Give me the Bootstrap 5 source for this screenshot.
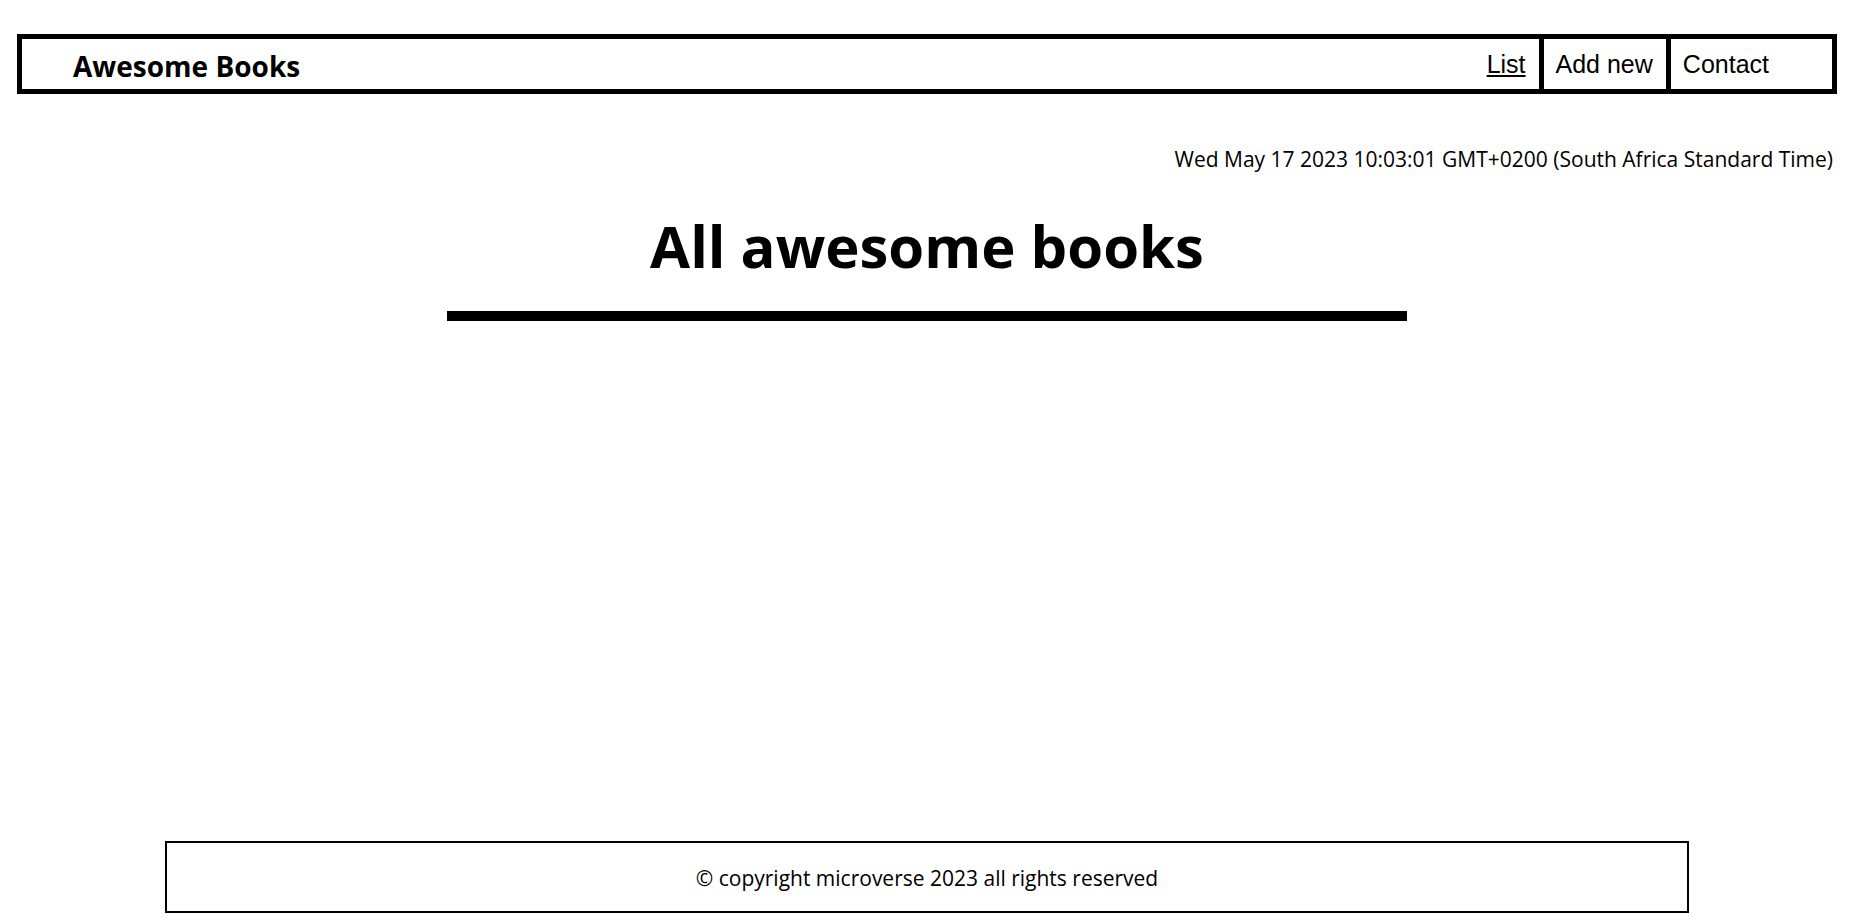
<!DOCTYPE html>
<html lang="en">
<head>
<meta charset="utf-8">
<meta name="viewport" content="width=device-width, initial-scale=1">
<title>Awesome Books</title>
<link href="https://cdn.jsdelivr.net/npm/bootstrap@5.3.0/dist/css/bootstrap.min.css" rel="stylesheet">
<style>
  body { color: #000; background: #fff; font-family: "Comic Sans MS", "Open Sans", sans-serif; font-size: 21px; line-height: 28px; padding: 34px 25px 8px 17px; }
  .site-header { border: 5px solid #000; padding-left: 51px; }
  .site-title, .page-title { font-weight: 700; }
  .site-title { font-size: 28px; line-height: 46px; padding-top: 4px; }
  .site-nav { font-family: "Liberation Sans", Arial, sans-serif; font-size: 25px; line-height: 50px; }
  .site-nav .nav-item + .nav-item { border-left: 5px solid #000; }
  .site-nav .nav-link { color: #000; padding: 0 13px 0 12px; }
  .site-nav .nav-item:last-child { padding-right: 50px; }
  .today { margin-top: 51px; padding-right: 4px; }
  .page-title { font-size: 58px; line-height: 84px; margin-top: 31px; }
  .title-rule { width: 960px; max-width: 100%; height: 10px; background: #000; opacity: 1; border: 0; margin: 23px auto 0; }
  .site-footer { margin: 0 148px; border: 2px solid #000; padding: 21px 20px 19px; }
</style>
</head>
<body class="d-flex flex-column min-vh-100">
<header class="site-header d-flex justify-content-between">
  <h2 class="site-title mb-0">Awesome Books</h2>
  <nav class="site-nav" aria-label="Main">
    <ul class="nav">
      <li class="nav-item"><a class="nav-link text-decoration-underline" href="#list" aria-current="page">List</a></li>
      <li class="nav-item"><a class="nav-link" href="#add">Add new</a></li>
      <li class="nav-item"><a class="nav-link" href="#contact">Contact</a></li>
    </ul>
  </nav>
</header>
<p class="today text-end mb-0">Wed May 17 2023 10:03:01 GMT+0200 (South Africa Standard Time)</p>
<main id="list">
  <h1 class="page-title text-center mb-0">All awesome books</h1>
  <hr class="title-rule">
</main>
<footer class="site-footer mt-auto text-center">© copyright microverse 2023 all rights reserved</footer>
<script src="https://cdn.jsdelivr.net/npm/bootstrap@5.3.0/dist/js/bootstrap.bundle.min.js"></script>
</body>
</html>
